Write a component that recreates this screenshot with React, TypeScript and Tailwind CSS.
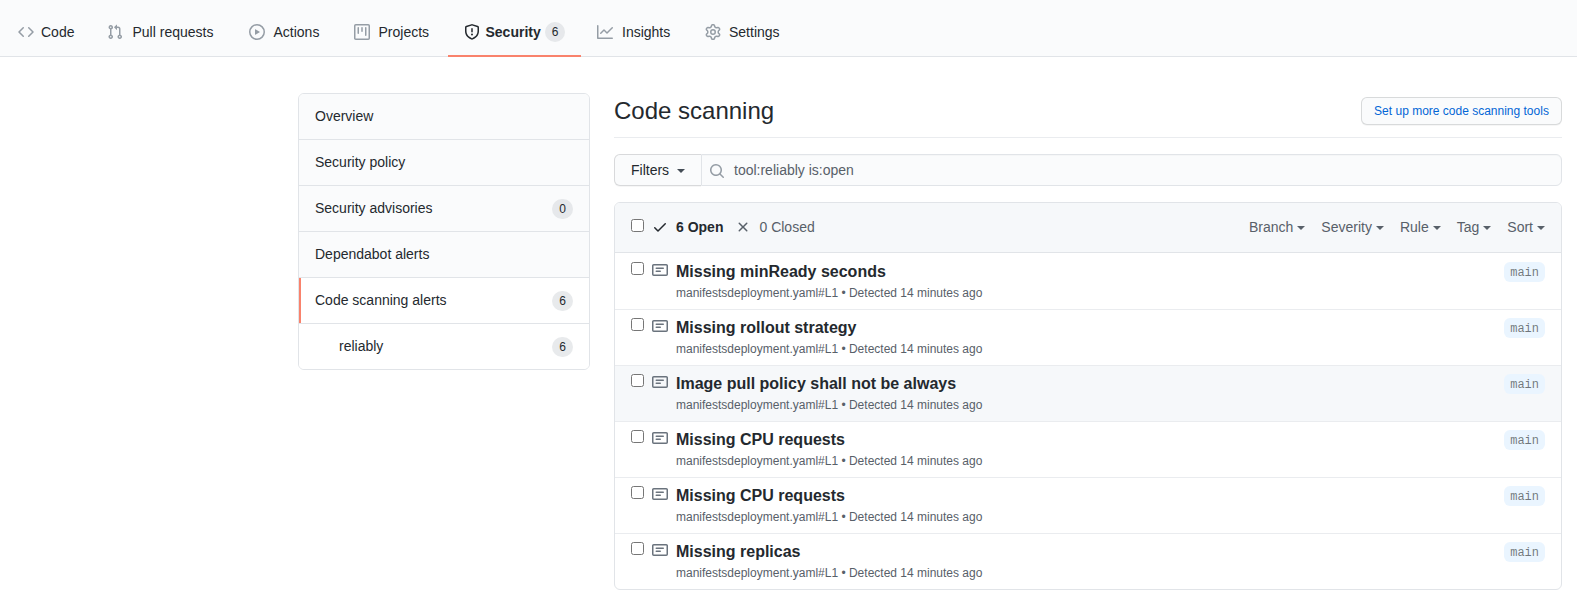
import type { ReactNode } from "react";

const icons = {
  code: "M4.72 3.22a.75.75 0 011.06 1.06L2.06 8l3.72 3.72a.75.75 0 11-1.06 1.06L.47 8.53a.75.75 0 010-1.06l4.25-4.25zm6.56 0a.75.75 0 10-1.06 1.06L13.94 8l-3.72 3.72a.75.75 0 101.06 1.06l4.25-4.25a.75.75 0 000-1.06l-4.25-4.25z",
  pull: "M7.177 3.073L9.573.677A.25.25 0 0110 .854v4.792a.25.25 0 01-.427.177L7.177 3.427a.25.25 0 010-.354zM3.75 2.5a.75.75 0 100 1.5.75.75 0 000-1.5zm-2.25.75a2.25 2.25 0 113 2.122v5.256a2.251 2.251 0 11-1.5 0V5.372A2.25 2.25 0 011.5 3.25zM11 2.5h-1V4h1a1 1 0 011 1v5.628a2.251 2.251 0 101.5 0V5A2.5 2.5 0 0011 2.5zm1 10.25a.75.75 0 111.5 0 .75.75 0 01-1.5 0zM3.75 12a.75.75 0 100 1.5.75.75 0 000-1.5z",
  play: "M1.5 8a6.5 6.5 0 1113 0 6.5 6.5 0 01-13 0zM8 0a8 8 0 100 16A8 8 0 008 0zM6.379 5.227A.25.25 0 006 5.442v5.117a.25.25 0 00.379.214l4.264-2.559a.25.25 0 000-.428L6.379 5.227z",
  project:
    "M1.75 0A1.75 1.75 0 000 1.75v12.5C0 15.216.784 16 1.75 16h12.5A1.75 1.75 0 0016 14.25V1.75A1.75 1.75 0 0014.25 0H1.75zM1.5 1.75a.25.25 0 01.25-.25h12.5a.25.25 0 01.25.25v12.5a.25.25 0 01-.25.25H1.75a.25.25 0 01-.25-.25V1.75zM11.75 3a.75.75 0 00-.75.75v7.5a.75.75 0 001.5 0v-7.5a.75.75 0 00-.75-.75zm-8.25.75a.75.75 0 011.5 0v5.5a.75.75 0 01-1.5 0v-5.5zM8 3a.75.75 0 00-.75.75v3.5a.75.75 0 001.5 0v-3.5A.75.75 0 008 3z",
  shield:
    "M7.467.133a1.75 1.75 0 011.066 0l5.25 1.68A1.75 1.75 0 0115 3.48V7c0 1.566-.32 3.182-1.303 4.682-.983 1.498-2.585 2.813-5.032 3.855a1.7 1.7 0 01-1.33 0c-2.447-1.042-4.049-2.357-5.032-3.855C1.32 10.182 1 8.566 1 7V3.48a1.75 1.75 0 011.217-1.667l5.25-1.68zm.61 1.429a.25.25 0 00-.153 0l-5.25 1.68a.25.25 0 00-.174.238V7c0 1.358.275 2.666 1.057 3.86.784 1.194 2.121 2.34 4.366 3.297a.2.2 0 00.154 0c2.245-.956 3.582-2.104 4.366-3.298C13.225 9.666 13.5 8.36 13.5 7V3.48a.25.25 0 00-.174-.237l-5.25-1.68zM9 10.5a1 1 0 11-2 0 1 1 0 012 0zm-.25-5.75a.75.75 0 10-1.5 0v3a.75.75 0 001.5 0v-3z",
  graph:
    "M1.5 1.75a.75.75 0 00-1.5 0v12.5c0 .414.336.75.75.75h14.5a.75.75 0 000-1.5H1.5V1.75zm14.28 2.53a.75.75 0 00-1.06-1.06L10 7.94 7.53 5.47a.75.75 0 00-1.06 0L3.22 8.72a.75.75 0 001.06 1.06L7 7.06l2.47 2.47a.75.75 0 001.06 0l5.25-5.25z",
  gear: "M7.429 1.525a6.593 6.593 0 011.142 0c.036.003.108.036.137.146l.289 1.105c.147.56.55.967.997 1.189.174.086.341.183.501.29.417.278.97.423 1.53.27l1.102-.303c.11-.03.175.016.195.046.219.31.41.641.573.989.014.031.022.11-.059.19l-.815.806c-.411.406-.562.957-.53 1.456a4.588 4.588 0 010 .582c-.032.499.119 1.05.53 1.456l.815.806c.08.08.073.159.059.19a6.494 6.494 0 01-.573.99c-.02.029-.086.074-.195.045l-1.103-.303c-.559-.153-1.112-.008-1.529.27-.16.107-.327.204-.5.29-.449.222-.851.628-.998 1.189l-.289 1.105c-.029.11-.101.143-.137.146a6.613 6.613 0 01-1.142 0c-.036-.003-.108-.037-.137-.146l-.289-1.105c-.147-.56-.55-.967-.997-1.189a4.502 4.502 0 01-.501-.29c-.417-.278-.97-.423-1.53-.27l-1.102.303c-.11.03-.175-.016-.195-.046a6.492 6.492 0 01-.573-.989c-.014-.031-.022-.11.059-.19l.815-.806c.411-.406.562-.957.53-1.456a4.587 4.587 0 010-.582c.032-.499-.119-1.05-.53-1.456l-.815-.806c-.08-.08-.073-.159-.059-.19a6.44 6.44 0 01.573-.99c.02-.029.086-.075.195-.045l1.103.303c.559.153 1.112.008 1.529-.27.16-.107.327-.204.5-.29.449-.222.851-.628.998-1.189l.289-1.105c.029-.11.101-.143.137-.146zM8 0c-.236 0-.47.01-.701.03-.743.065-1.29.615-1.458 1.261l-.29 1.106c-.017.066-.078.158-.211.224a5.994 5.994 0 00-.668.386c-.123.082-.233.09-.3.071L3.27 2.776c-.644-.177-1.392.02-1.82.63a7.977 7.977 0 00-.704 1.217c-.315.675-.111 1.422.363 1.891l.815.806c.05.048.098.147.088.294a6.084 6.084 0 000 .772c.01.147-.038.246-.088.294l-.815.806c-.474.469-.678 1.216-.363 1.891.2.428.436.835.704 1.218.428.609 1.176.806 1.82.63l1.103-.303c.066-.019.176-.011.299.071.213.143.436.272.668.386.133.066.194.158.212.224l.289 1.106c.169.646.715 1.196 1.458 1.26a8.094 8.094 0 001.402 0c.743-.064 1.29-.614 1.458-1.26l.29-1.106c.017-.066.078-.158.211-.224a5.98 5.98 0 00.668-.386c.123-.082.233-.09.3-.071l1.102.302c.644.177 1.392-.02 1.82-.63.268-.382.505-.789.704-1.217.315-.675.111-1.422-.364-1.891l-.814-.806c-.05-.048-.098-.147-.088-.294a6.1 6.1 0 000-.772c-.01-.147.039-.246.088-.294l.814-.806c.475-.469.679-1.216.364-1.891a7.992 7.992 0 00-.704-1.218c-.428-.609-1.176-.806-1.82-.63l-1.103.303c-.066.019-.176.011-.299-.071a5.991 5.991 0 00-.668-.386c-.133-.066-.194-.158-.212-.224L10.16 1.29C9.99.645 9.444.095 8.701.031A8.094 8.094 0 008 0zm1.5 8a1.5 1.5 0 11-3 0 1.5 1.5 0 013 0zM11 8a3 3 0 11-6 0 3 3 0 016 0z",
  search:
    "M11.5 7a4.499 4.499 0 11-8.998 0A4.499 4.499 0 0111.5 7zm-.82 4.74a6 6 0 111.06-1.06l3.04 3.04a.75.75 0 11-1.06 1.06l-3.04-3.04z",
  check:
    "M13.78 4.22a.75.75 0 010 1.06l-7.25 7.25a.75.75 0 01-1.06 0L2.22 9.28a.75.75 0 011.06-1.06L6 10.94l6.72-6.72a.75.75 0 011.06 0z",
  x: "M3.72 3.72a.75.75 0 011.06 0L8 6.94l3.22-3.22a.75.75 0 111.06 1.06L9.06 8l3.22 3.22a.75.75 0 11-1.06 1.06L8 9.06l-3.22 3.22a.75.75 0 01-1.06-1.06L6.94 8 3.72 4.78a.75.75 0 010-1.06z",
  note: "M0 3.75C0 2.784.784 2 1.75 2h12.5c.966 0 1.75.784 1.75 1.75v8.5A1.75 1.75 0 0114.25 14H1.75A1.75 1.75 0 010 12.25v-8.5zm1.75-.25a.25.25 0 00-.25.25v8.5c0 .138.112.25.25.25h12.5a.25.25 0 00.25-.25v-8.5a.25.25 0 00-.25-.25H1.75zM3.5 6.25a.75.75 0 01.75-.75h7a.75.75 0 010 1.5h-7a.75.75 0 01-.75-.75zm.75 2.25a.75.75 0 000 1.5h4a.75.75 0 000-1.5h-4z",
};

function Icon({ name, className = "" }: { name: keyof typeof icons; className?: string }) {
  return (
    <svg viewBox="0 0 16 16" width="16" height="16" fill="currentColor" className={`shrink-0 ${className}`}>
      <path fillRule="evenodd" d={icons[name]} />
    </svg>
  );
}

function Counter({ children }: { children: ReactNode }) {
  return (
    <span className="inline-block h-5 min-w-5 rounded-full border border-transparent bg-[#d1d5da]/50 bg-clip-border px-1.5 text-center text-xs leading-[18px] font-medium text-[#24292e]">
      {children}
    </span>
  );
}

function Caret({ className = "" }: { className?: string }) {
  return <span className={`inline-block border-x-4 border-t-4 border-x-transparent border-t-current ${className}`} />;
}

const tabs: { icon: keyof typeof icons; label: string; box: string; gap: string; count?: number }[] = [
  { icon: "code", label: "Code", box: "w-[89px]", gap: "ml-[7px]" },
  { icon: "pull", label: "Pull requests", box: "w-[142px]", gap: "ml-[9.5px]" },
  { icon: "play", label: "Actions", box: "w-[105px]", gap: "ml-[8.5px]" },
  { icon: "project", label: "Projects", box: "w-[110px]", gap: "ml-[8.5px]" },
  { icon: "shield", label: "Security", box: "w-[133px]", gap: "ml-[5.5px]", count: 6 },
  { icon: "graph", label: "Insights", box: "w-[108px]", gap: "ml-[9px]" },
  { icon: "gear", label: "Settings", box: "w-[108px]", gap: "ml-2" },
];

const menu = [
  { label: "Overview" },
  { label: "Security policy" },
  { label: "Security advisories", count: 0 },
  { label: "Dependabot alerts" },
  { label: "Code scanning alerts", count: 6, active: true },
  { label: "reliably", count: 6, nested: true },
];

const alerts = [
  "Missing minReady seconds",
  "Missing rollout strategy",
  "Image pull policy shall not be always",
  "Missing CPU requests",
  "Missing CPU requests",
  "Missing replicas",
];

export default function App() {
  return (
    <div className="min-h-[604px] bg-white font-['Liberation_Sans',Arial,sans-serif] text-sm leading-[21px] text-[#24292e]">
      <nav className="flex h-[57px] items-end border-b border-[#e1e4e8] bg-[#fafbfc] pl-0.5">
        {tabs.map((t) => (
          <a
            key={t.label}
            className={`-mb-px flex h-[49px] items-center border-b-2 pt-px pl-4 whitespace-nowrap ${t.box} ${
              t.count ? "border-[#f9826c] font-semibold" : "border-transparent"
            }`}
          >
            <Icon name={t.icon} className={t.count ? "" : "text-[#959da5]"} />
            <span className={t.gap}>{t.label}</span>
            {t.count && (
              <span className="ml-1 flex">
                <Counter>{t.count}</Counter>
              </span>
            )}
          </a>
        ))}
      </nav>

      <div className="flex items-start gap-6 pt-9 pr-[15px] pl-[298px]">
        <aside className="w-[292px] shrink-0 overflow-hidden rounded-md border border-[#e1e4e8]">
          {menu.map((m, i) => (
            <a
              key={m.label}
              className={`flex items-center justify-between pr-4 ${
                i === menu.length - 1 ? "h-[45px]" : "h-[46px] border-b border-[#e1e4e8]"
              } ${m.active ? "shadow-[inset_2px_0_0_#f9826c]" : ""} ${
                m.active || m.nested ? "bg-white" : "bg-[#fafbfc]"
              } ${m.nested ? "pl-10" : "pl-4"}`}
            >
              <span>{m.label}</span>
              {m.count !== undefined && (
                <span className="flex pt-px">
                  <Counter>{m.count}</Counter>
                </span>
              )}
            </a>
          ))}
        </aside>

        <main className="min-w-0 flex-1">
          <div className="flex h-[45px] items-start justify-between border-b border-[#eaecef]">
            <h1 className="text-2xl leading-9">Code scanning</h1>
            <button className="mt-1 h-7 w-[201px] rounded-md border border-[#1b1f23]/15 bg-[#fafbfc] text-xs leading-5 font-medium whitespace-nowrap text-[#0366d6] shadow-[0_1px_0_rgba(27,31,35,0.04)]">
              Set up more code scanning tools
            </button>
          </div>

          <div className="mt-4 flex h-8">
            <button className="flex w-[87px] items-center rounded-l-md border border-r-0 border-[#1b1f23]/15 bg-[#fafbfc] pl-4 font-medium shadow-[0_1px_0_rgba(27,31,35,0.04)]">
              Filters
              <Caret className="mt-0.5 ml-2 text-[#444d56]" />
            </button>
            <div className="flex flex-1 items-center rounded-r-md border border-[#e1e4e8] bg-[#fafbfc] pl-[7px] text-[#586069] shadow-[inset_0_1px_0_rgba(225,228,232,0.2)]">
              <Icon name="search" className="mt-0.5 text-[#959da5]" />
              <span className="ml-[9px]">tool:reliably is:open</span>
            </div>
          </div>

          <section className="mt-4 overflow-hidden rounded-md border border-[#e1e4e8]">
            <header className="flex h-[50px] items-center border-b border-[#e1e4e8] bg-[#f6f8fa] px-4 text-[#586069]">
              <input type="checkbox" className="mb-1 size-[13px]" />
              <Icon name="check" className="mb-px ml-2 text-[#24292e]" />
              <span className="ml-2 font-semibold text-[#24292e]">6 Open</span>
              <Icon name="x" className="mb-px ml-3" />
              <span className="ml-2">0 Closed</span>
              <div className="ml-auto flex gap-4">
                {["Branch", "Severity", "Rule", "Tag", "Sort"].map((f) => (
                  <span key={f} className="flex items-center">
                    {f}
                    <Caret className="ml-1" />
                  </span>
                ))}
              </div>
            </header>
            {alerts.map((title, i) => (
              <article
                key={i}
                className={`flex h-14 items-start border-t px-4 pt-2 ${
                  i === 0 ? "border-transparent" : "border-[#eaecef]"
                } ${i === 2 ? "bg-[#f6f8fa]" : ""}`}
              >
                <input type="checkbox" className="size-[13px]" />
                <Icon name="note" className="ml-2 text-[#6a737d]" />
                <div className="ml-2 flex-1">
                  <h2 className="text-base leading-5 font-semibold">{title}</h2>
                  <p className="mt-0.5 text-xs leading-[18px] text-[#586069]">
                    manifestsdeployment.yaml#L1 • Detected 14 minutes ago
                  </p>
                </div>
                <span className="h-5 rounded-md bg-[#eaf5ff] px-1.5 font-['Liberation_Mono',monospace] text-xs leading-[22px] text-[#1b1f23]/60">
                  main
                </span>
              </article>
            ))}
          </section>
        </main>
      </div>
    </div>
  );
}
